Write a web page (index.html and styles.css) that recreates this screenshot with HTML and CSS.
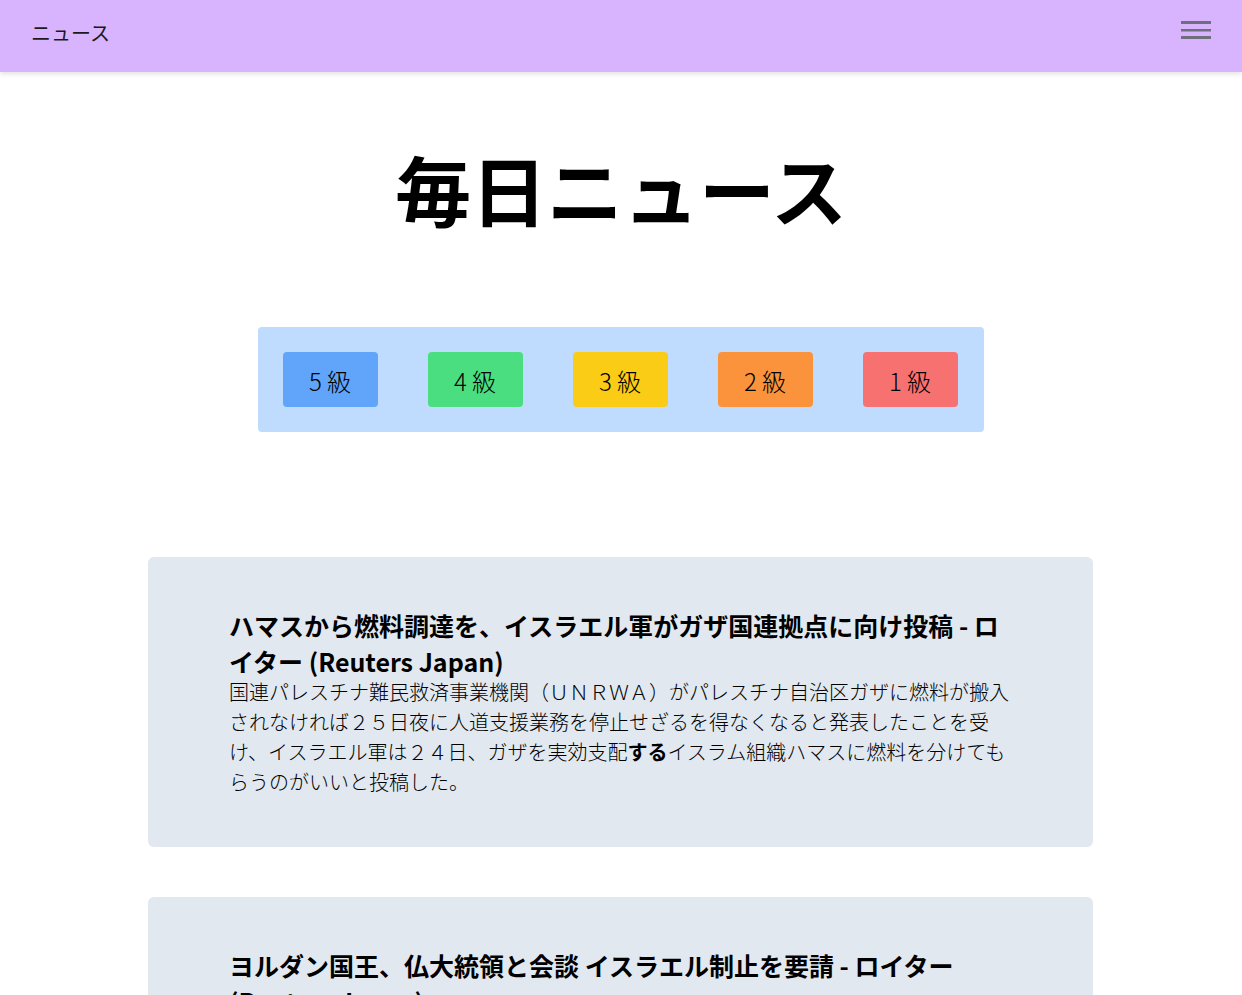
FILE: index.html
```html
<!DOCTYPE html>
<html lang="ja">
<head>
<meta charset="utf-8">
<title>毎日ニュース</title>
<link rel="stylesheet" href="styles.css">
</head>
<body>
<header class="navbar">
  <span class="brand">ニュース</span>
  <button class="menu" aria-label="menu">
    <svg width="30" height="20" viewBox="0 0 30 20"><rect x="0" y="0" width="30" height="3" fill="#6e6e7e"/><rect x="0" y="8" width="30" height="2.5" fill="#6e6e7e"/><rect x="0" y="15" width="30" height="3" fill="#6e6e7e"/></svg>
  </button>
</header>
<main class="main">
  <h1 class="title">毎日ニュース</h1>
  <div class="levels">
    <button class="level l5">5 級</button>
    <button class="level l4">4 級</button>
    <button class="level l3">3 級</button>
    <button class="level l2">2 級</button>
    <button class="level l1">1 級</button>
  </div>
  <section class="news">
    <article class="card">
      <h2 class="card-title">ハマスから燃料調達を、イスラエル軍がガザ国連拠点に向け投稿 - ロイター (Reuters Japan)</h2>
      <p class="card-body">国連パレスチナ難民救済事業機関（ＵＮＲＷＡ）がパレスチナ自治区ガザに燃料が搬入されなければ２５日夜に人道支援業務を停止せざるを得なくなると発表したことを受け、イスラエル軍は２４日、ガザを実効支配<b>する</b>イスラム組織ハマスに燃料を分けてもらうのがいいと投稿した。</p>
    </article>
    <article class="card">
      <h2 class="card-title">ヨルダン国王、仏大統領と会談 イスラエル制止を要請 - ロイター (Reuters Japan)</h2>
      <p class="card-body">ヨルダンのアブドラ国王は２４日、フランスのマクロン大統領と会談し、イスラエルによるガザ地区への攻撃を止めるよう求めた。</p>
    </article>
  </section>
</main>
</body>
</html>
```

FILE: styles.css
```css
* { box-sizing: border-box; }
html, body { margin: 0; padding: 0; }
body {
  font-family: "Noto Sans CJK JP", "Noto Sans", sans-serif;
  color: #000;
  background: #fff;
}
.navbar {
  height: 72px;
  background: #d8b4fe;
  display: flex;
  align-items: center;
  justify-content: space-between;
  padding: 0 31px 0 31px;
  box-shadow: 0 2px 5px rgba(0,0,0,0.12);
}
.brand {
  font-size: 20px;
  color: #1a1a1a;
  font-weight: 400;
  line-height: 1;
  padding-bottom: 6px;
}
.menu {
  background: none;
  border: 0;
  padding: 0;
  margin: 0 0 10px 0;
  display: flex;
  cursor: pointer;
}
.main {
  display: flex;
  flex-direction: column;
  align-items: center;
}
.title {
  margin: 80px 0 0 0;
  font-size: 76px;
  line-height: 72px;
  font-weight: 700;
}
.levels {
  margin-top: 103px;
  margin-left: -1px;
  background: #bfdbfe;
  border-radius: 4px;
  padding: 25px 26px 25px 25px;
  display: flex;
  gap: 50px;
}
.level {
  width: 95px;
  height: 55px;
  border: 0;
  border-radius: 4px;
  font-family: inherit;
  font-size: 24px;
  font-weight: 300;
  color: #000;
  padding: 2px 0 0 0;
  display: flex;
  align-items: center;
  justify-content: center;
  cursor: pointer;
}
.l5 { background: #60a5fa; }
.l4 { background: #4ade80; }
.l3 { background: #facc15; }
.l2 { background: #fb923c; }
.l1 { background: #f87171; }
.news {
  margin-top: 125px;
  margin-left: -1px;
  display: flex;
  flex-direction: column;
  gap: 50px;
  width: 945px;
}
.card {
  background: #e2e8f0;
  border-radius: 6px;
  padding: 50px 81px 50px 81px;
}
.card-title {
  margin: 0;
  font-size: 25px;
  line-height: 36px;
  font-weight: 700;
}
.card-body {
  margin: -2px 0 0 0;
  font-size: 20px;
  line-height: 30px;
  font-weight: 300;
  color: #000;
}
.card-body b { font-weight: 700; }
```
